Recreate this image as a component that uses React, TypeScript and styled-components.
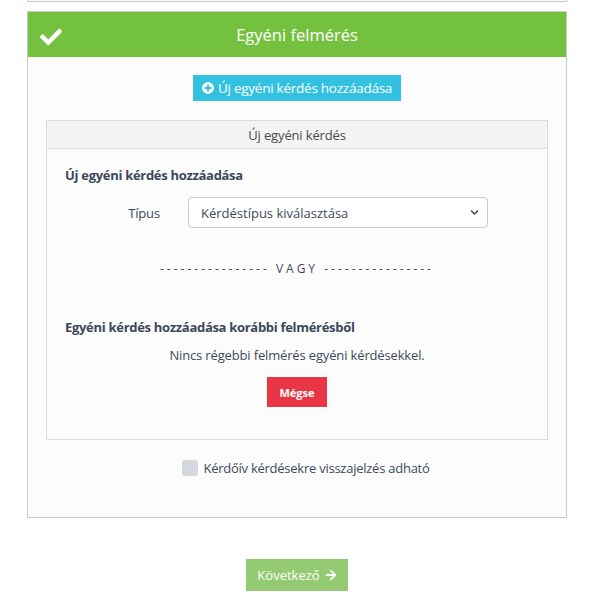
import React from "react";
import styled, { createGlobalStyle } from "styled-components";
import { FaCheck, FaPlusCircle, FaArrowRight, FaChevronDown } from "react-icons/fa";

const Global = createGlobalStyle`
  html, body { margin: 0; padding: 0; background: #ffffff; }
  body { font-family: "Open Sans", "Noto Sans", sans-serif; color: #3d4a5c; letter-spacing: -0.15px; }
  * { box-sizing: border-box; }
`;

const Page = styled.div`
  width: 596px;
  padding: 0 29px 0 27px;
  display: flex;
  flex-direction: column;
`;

const PrevCard = styled.div`
  height: 2px;
  border: 1px solid #c9c9c9;
  border-top: none;
  background: #fcfcfc;
`;

const Card = styled.section`
  margin-top: 9px;
  border: 1px solid #c9c9c9;
  background: #fcfcfc;
  display: flex;
  flex-direction: column;
`;

const CardHeader = styled.header`
  height: 45px;
  background: #74c13f;
  color: #ffffff;
  display: flex;
  align-items: center;
  position: relative;
  justify-content: center;
  font-size: 16.5px;
  letter-spacing: 0;
`;

const HeaderIcon = styled.span`
  position: absolute;
  left: 12px;
  top: 14px;
  display: flex;
  font-size: 22px;
`;

const CardBody = styled.div`
  padding: 18px 18px 40px;
  display: flex;
  flex-direction: column;
  align-items: center;
`;

const Button = styled.button<{ $bg: string }>`
  border: none;
  border-radius: 0;
  background: ${(p) => p.$bg};
  color: #ffffff;
  font-family: inherit;
  display: inline-flex;
  align-items: center;
  justify-content: center;
  gap: 4px;
  cursor: pointer;
`;

const AddButton = styled(Button)`
  height: 26px;
  padding: 0 9px;
  font-size: 13.5px;
  letter-spacing: -0.25px;
  svg { font-size: 12px; }
`;

const InnerPanel = styled.div`
  align-self: stretch;
  margin-top: 19px;
  border: 1px solid #dcdcdc;
  background: #fcfcfc;
`;

const InnerHeader = styled.div`
  height: 28px;
  background: #f4f4f4;
  border-bottom: 1px solid #dcdcdc;
  display: flex;
  align-items: center;
  justify-content: center;
  font-size: 13px;
  color: #4a4a4a;
`;

const InnerBody = styled.div`
  padding: 17px 18px 32px;
  display: flex;
  flex-direction: column;
`;

const SubTitle = styled.h4<{ $top?: number }>`
  margin: ${(p) => p.$top ?? 0}px 0 0;
  font-size: 13px;
  font-weight: 700;
  letter-spacing: -0.3px;
  color: #3b4859;
  line-height: 18px;
`;

const FormRow = styled.div`
  display: grid;
  grid-template-columns: 123px 300px;
  align-items: center;
  margin-top: 13px;
`;

const Label = styled.label`
  text-align: right;
  padding-right: 28px;
  font-size: 13px;
  color: #3d4a5c;
`;

const SelectWrap = styled.div`
  position: relative;
  height: 31px;
`;

const Select = styled.select`
  appearance: none;
  width: 100%;
  height: 100%;
  border: 1px solid #cccccc;
  border-radius: 4px;
  background: #ffffff;
  padding: 0 12px;
  font-family: inherit;
  font-size: 13px;
  color: #3d4a5c;
`;

const Chevron = styled.span`
  position: absolute;
  right: 9px;
  top: 11px;
  display: flex;
  font-size: 9px;
  color: #444;
  pointer-events: none;
`;

const Divider = styled.div`
  margin-top: 32px;
  text-align: center;
  font-size: 12px;
  letter-spacing: 3px;
  color: #3d4a5c;
  white-space: nowrap;
`;

const Info = styled.p`
  margin: 10px 0 0;
  text-align: center;
  font-size: 13px;
  color: #3d4a5c;
`;

const CancelButton = styled(Button)`
  align-self: center;
  margin-top: 13px;
  width: 60px;
  height: 30px;
  font-size: 11px;
  font-weight: 700;
`;

const CheckRow = styled.label`
  margin-top: 19px;
  padding-left: 18px;
  display: flex;
  align-items: center;
  gap: 5px;
  font-size: 13px;
  letter-spacing: -0.25px;
  color: #3d4a5c;
`;

const Box = styled.span`
  width: 16px;
  height: 16px;
  border-radius: 3px;
  background: #d5d9de;
`;

const Footer = styled.div`
  display: flex;
  justify-content: center;
  margin-top: 41px;
`;

const NextButton = styled(Button)`
  width: 102px;
  height: 32px;
  font-size: 13px;
  gap: 5px;
  svg { font-size: 12px; }
`;

export default function App() {
  return (
    <>
      <Global />
      <Page>
        <PrevCard />
        <Card>
          <CardHeader>
            <HeaderIcon>
              <FaCheck />
            </HeaderIcon>
            Egyéni felmérés
          </CardHeader>
          <CardBody>
            <AddButton $bg="#33c1e1">
              <FaPlusCircle /> Új egyéni kérdés hozzáadása
            </AddButton>
            <InnerPanel>
              <InnerHeader>Új egyéni kérdés</InnerHeader>
              <InnerBody>
                <SubTitle>Új egyéni kérdés hozzáadása</SubTitle>
                <FormRow>
                  <Label>Típus</Label>
                  <SelectWrap>
                    <Select defaultValue="">
                      <option value="">Kérdéstípus kiválasztása</option>
                    </Select>
                    <Chevron>
                      <FaChevronDown />
                    </Chevron>
                  </SelectWrap>
                </FormRow>
                <Divider>---------------- VAGY ----------------</Divider>
                <SubTitle $top={41}>Egyéni kérdés hozzáadása korábbi felmérésből</SubTitle>
                <Info>Nincs régebbi felmérés egyéni kérdésekkel.</Info>
                <CancelButton $bg="#e93646">Mégse</CancelButton>
              </InnerBody>
            </InnerPanel>
            <CheckRow>
              <Box />
              Kérdőív kérdésekre visszajelzés adható
            </CheckRow>
          </CardBody>
        </Card>
        <Footer>
          <NextButton $bg="#94cb72">
            Következő <FaArrowRight />
          </NextButton>
        </Footer>
      </Page>
    </>
  );
}
